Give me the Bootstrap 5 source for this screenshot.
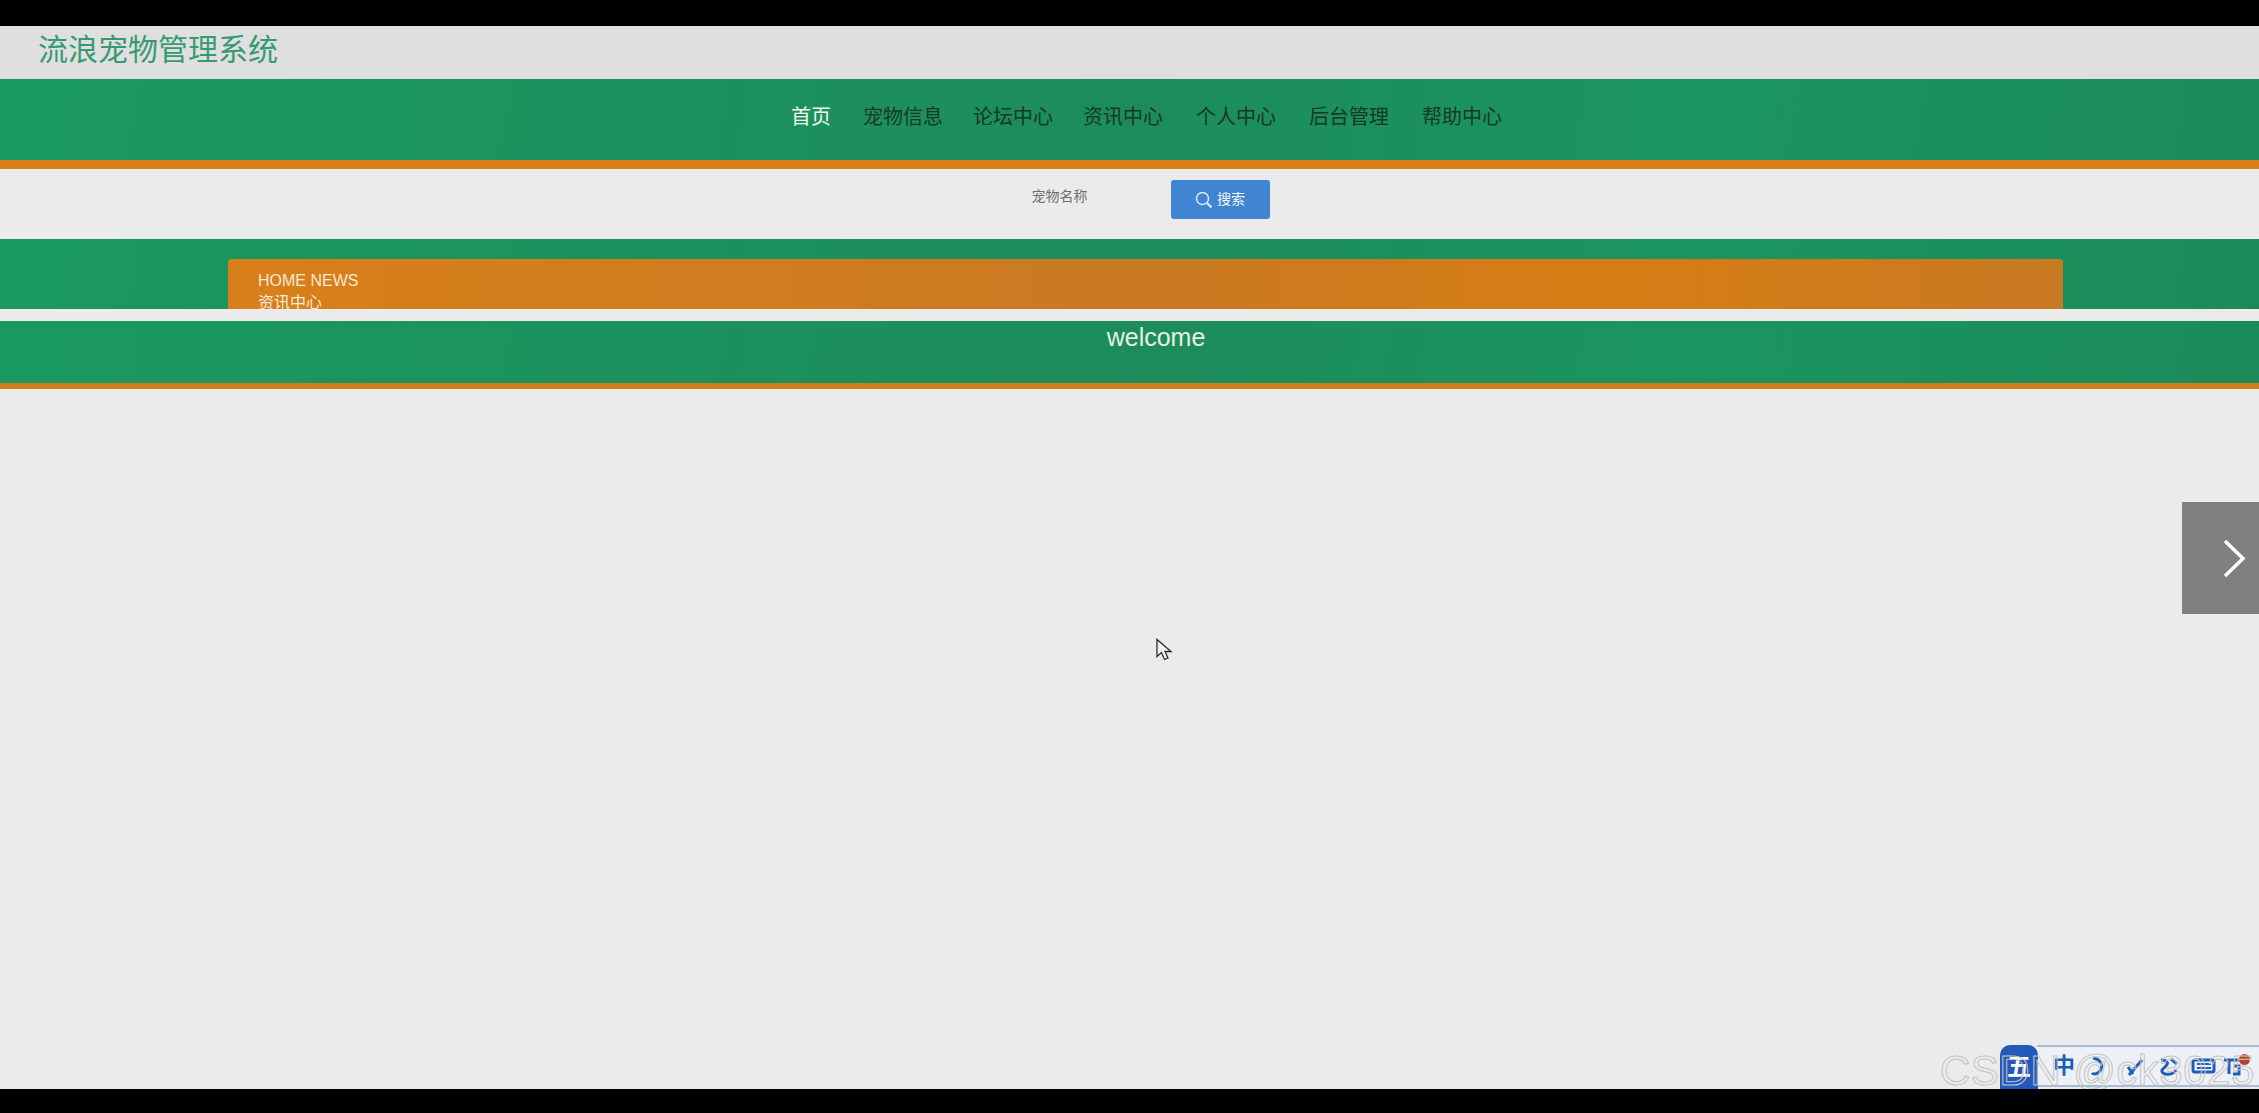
<!DOCTYPE html>
<html lang="zh-CN">
<head>
  <meta charset="UTF-8" />
  <title>流浪宠物管理系统</title>
  <link href="https://cdn.jsdelivr.net/npm/bootstrap@5.3.0/dist/css/bootstrap.min.css" rel="stylesheet">
  <style>
    html, body { height: 100%; overflow: hidden; }
    body {
      background: #000;
      font-family: "Liberation Sans", "Noto Sans CJK SC", sans-serif;
    }
    .letterbox-top { height: 26px; background: #000; }
    .letterbox-bottom { height: 24px; background: #000; }
    .screen { height: 1063px; background: #ebebeb; overflow: hidden; }

    .title-bar { height: 53px; background: #dfdfdf; padding-left: 38px; padding-bottom: 5px; }
    .site-title { font-size: 30px; line-height: 1; color: #379a72; margin: 0; font-weight: 400; }

    .green-band { background: linear-gradient(100deg, #19995f 0%, #1d8c5c 50%, #1a9560 75%, #1b8a5a 100%); }
    .main-menu { height: 81px; padding-bottom: 6px; padding-left: 34px; gap: 30px; }
    .main-menu a { font-size: 20px; line-height: 1; color: #17382a; text-decoration: none; }
    .main-menu a.current { color: #f2f7ee; margin-right: 2px; }
    .main-menu a:nth-child(n+5) { margin-left: 3px; }
    .orange-rule { height: 9px; background: #d87e1b; }

    .search-row { height: 70px; padding-top: 11px; padding-left: 42px; }
    .search-label { font-size: 14px; line-height: 1; color: #6e6e6e; width: 139px; margin-top: 9px; }
    .search-btn {
      width: 99px; height: 39px; padding: 0; background: #3f85d2; border: 0; border-radius: 3px;
      color: #f2f6fb; font-size: 14px;
    }

    .news-band { height: 70px; padding-top: 20px; overflow: hidden; }
    .news-head {
      width: 1835px; height: 60px; margin-left: 228px; padding: 11px 30px;
      background: linear-gradient(90deg, #d97f1a 0%, #c97a22 50%, #d67c14 75%, #c87a22 100%);
      border-radius: 4px 4px 0 0; color: #f5ead6; font-size: 16px; line-height: 22px;
    }
    .band-gap { height: 12px; }

    .welcome-band { height: 62px; color: #e6f1e0; font-size: 25px; line-height: 1; text-align: center; padding-top: 4px; }
    .welcome-band span { display: inline-block; margin-left: 53px; }
    .orange-thin { height: 6px; background: #d27c1c; }

    .next-arrow { right: 0; top: 476px; width: 77px; height: 112px; background: #808080; }
    .mouse-pointer { left: 1155px; top: 612px; }

    .ime-bar {
      left: 2037px; top: 1019px; width: 222px; height: 42px; background: #edf1f6;
      border-top: 2px solid #a7bcd6; border-bottom: 2px solid #a7bcd6; padding-left: 16px;
    }
    .ime-char { color: #1d5fb8; font-size: 22px; line-height: 1; font-weight: 700; }
    .ime-logo {
      left: 2000px; top: 1019px; width: 38px; height: 44px; background: #2359b8; border-radius: 10px 10px 0 0;
      color: #fff; font-size: 24px; line-height: 44px; text-align: center; font-weight: 700;
    }
    .ime-dot { left: 2239px; top: 1028px; width: 11px; height: 11px; background: #b9402c; border-radius: 50%; }
    .watermark {
      left: 1940px; top: 1021px; font-size: 42px; line-height: 48px; white-space: nowrap;
      color: transparent; -webkit-text-stroke: 1px #c4c4c4; letter-spacing: .5px;
    }
  </style>
</head>
<body>
  <div class="letterbox-top"></div>

  <div class="screen position-relative">
    <header class="title-bar d-flex align-items-center">
      <h1 class="site-title">流浪宠物管理系统</h1>
    </header>

    <nav class="main-menu green-band d-flex align-items-center justify-content-center">
      <a class="current" href="#">首页</a>
      <a href="#">宠物信息</a>
      <a href="#">论坛中心</a>
      <a href="#">资讯中心</a>
      <a href="#">个人中心</a>
      <a href="#">后台管理</a>
      <a href="#">帮助中心</a>
    </nav>
    <div class="orange-rule"></div>

    <form class="search-row d-flex justify-content-center align-items-start">
      <label class="search-label">宠物名称</label>
      <button type="button" class="btn search-btn d-flex align-items-center justify-content-center gap-1">
        <svg width="18" height="18" viewBox="0 0 18 18" fill="none" stroke="#dfeaf6" stroke-width="1.5">
          <circle cx="7.5" cy="7.5" r="6"/>
          <path d="M12 12l4.5 4.5" stroke-width="2.2"/>
        </svg>
        搜索
      </button>
    </form>

    <section class="news-band green-band">
      <div class="news-head">
        HOME NEWS<br>资讯中心
      </div>
    </section>
    <div class="band-gap"></div>

    <section class="welcome-band green-band"><span>welcome</span></section>
    <div class="orange-thin"></div>

    <!-- carousel arrow -->
    <div class="next-arrow position-absolute">
      <svg class="d-block" width="77" height="112" viewBox="0 0 77 112" fill="none" stroke="#fff" stroke-width="3.5">
        <path d="M43 39l18 17.500-18 17.500"/>
      </svg>
    </div>

    <svg class="mouse-pointer position-absolute" width="18" height="25" viewBox="0 0 18 25" fill="#f4f4f4" stroke="#2a2a2a" stroke-width="1.300">
      <path d="M2 1.500v17l4.500-4 3 7 3.500-1.500-3-6.500h6z"/>
    </svg>

    <!-- input method toolbar + watermark from the recording -->
    <div class="ime-bar position-absolute d-flex align-items-center">
      <span class="ime-char">中</span>
      <svg class="ms-3" width="150" height="22" viewBox="0 0 150 22" fill="none" stroke="#1d5fb8" stroke-width="3">
        <path d="M2 3c7 1 10 6 8 11s-7 6-9 4"/>
        <path d="M38 20l13-15M37 12l5 7"/>
        <path d="M70 5c6 0 8 3 5 6s-7 5-1 8c5 1 9-1 11-4M80 4l6 5"/>
        <rect x="102" y="5" width="21" height="12" rx="2"/>
        <path d="M106 9h14M106 13h14" stroke-width="2"/>
        <path d="M133 5h15M138 5v14M143 11h5v8h-6" />
      </svg>
    </div>
    <div class="ime-logo position-absolute">五</div>
    <div class="ime-dot position-absolute"></div>
    <div class="watermark position-absolute">CSDN @ck3025</div>
  </div>

  <div class="letterbox-bottom"></div>

  <script src="https://cdn.jsdelivr.net/npm/bootstrap@5.3.0/dist/js/bootstrap.bundle.min.js"></script>
</body>
</html>
